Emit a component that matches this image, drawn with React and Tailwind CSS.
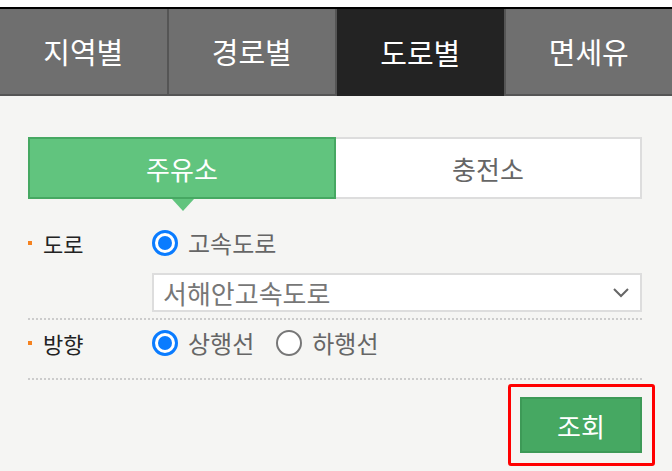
import { useState } from 'react';

const tabs = ['지역별', '경로별', '도로별', '면세유'];

function Radio({ checked, label }) {
  return (
    <label className="flex items-center gap-[10px] cursor-pointer">
      {checked ? (
        <span className="w-[26px] h-[26px] rounded-full border-[3px] border-[#0a7cff] bg-white flex items-center justify-center">
          <span className="w-[14px] h-[14px] rounded-full bg-[#0a7cff]" />
        </span>
      ) : (
        <span className="w-[26px] h-[26px] rounded-full border-2 border-[#777] bg-white" />
      )}
      <span className="text-[24px] text-[#666] leading-none">{label}</span>
    </label>
  );
}

function Label({ children }) {
  return (
    <div className="w-[124px] flex items-center">
      <span className="w-[4px] h-[4px] bg-[#f5821f] mr-[11px]" />
      <span className="text-[22px] text-[#222] leading-none">{children}</span>
    </div>
  );
}

export default function App() {
  const [active, setActive] = useState(2);
  const [station, setStation] = useState(0);

  return (
    <div
      className="w-[672px] h-[471px] bg-[#f5f5f3] overflow-hidden"
      style={{ fontFamily: '"Noto Sans CJK KR", "Noto Sans", sans-serif' }}
    >
      {/* 상단 탭 */}
      <div className="h-[7px] bg-white" />
      <div className="h-[2px] bg-black" />
      <div className="flex h-[87px]">
        {tabs.map((t, i) => (
          <button
            key={t}
            onClick={() => setActive(i)}
            className={
              'flex-1 flex items-center justify-center text-[29px] text-white ' +
              (i > 0 ? 'border-l-2 border-l-[#555] ' : '') +
              (i === active ? 'bg-[#232323]' : 'bg-[#6f6f6f] border-b-2 border-b-[#555]')
            }
          >
            {t}
          </button>
        ))}
      </div>

      <div className="pl-[28px] pr-[30px]">
        {/* 주유소 / 충전소 */}
        <div className="relative flex h-[62px] mt-[41px]">
          <button
            onClick={() => setStation(0)}
            className={
              'flex-1 flex items-center justify-center text-[26px] border-2 ' +
              (station === 0 ? 'bg-[#61c47e] border-[#46a862] text-white' : 'bg-white border-[#ddd] border-r-0 text-[#666]')
            }
          >
            주유소
          </button>
          <button
            onClick={() => setStation(1)}
            className={
              'flex-1 flex items-center justify-center text-[26px] border-2 ' +
              (station === 1 ? 'bg-[#61c47e] border-[#46a862] text-white' : 'bg-white border-[#ddd] border-l-0 text-[#666]')
            }
          >
            충전소
          </button>
          <span
            className={
              'absolute top-full w-0 h-0 border-x-[11px] border-x-transparent border-t-[12px] border-t-[#61c47e] ' +
              (station === 0 ? 'left-[144px]' : 'left-[451px]')
            }
          />
        </div>

        {/* 도로 */}
        <div className="flex items-center h-[28px] mt-[30px]">
          <Label>도로</Label>
          <Radio checked label="고속도로" />
        </div>
        <div className="ml-[124px] mt-[16px] h-[39px] bg-white border-2 border-[#ddd] flex items-center justify-between pl-[9px] pr-[10px]">
          <span className="text-[26px] text-[#777] leading-none">서해안고속도로</span>
          <svg width="18" height="12" viewBox="0 0 18 12" fill="none" stroke="#666" strokeWidth="2">
            <path d="M2 2l7 7 7-7" />
          </svg>
        </div>
        <div className="mt-[6px] border-t-2 border-dotted border-[#ccc]" />

        {/* 방향 */}
        <div className="flex items-center h-[28px] mt-[9px]">
          <Label>방향</Label>
          <div className="flex items-center gap-[22px]">
            <Radio checked label="상행선" />
            <Radio label="하행선" />
          </div>
        </div>
        <div className="mt-[21px] border-t-2 border-dotted border-[#ccc]" />

        {/* 조회 버튼 */}
        <div className="flex justify-end mt-[17px]">
          <div className="relative">
            <span className="absolute -top-[13px] -bottom-[13px] -left-[12px] -right-[13px] border-[3px] border-[#ff0000] rounded-[3px]" />
            <button className="relative w-[122px] h-[56px] bg-[#46a862] border-2 border-[#3d9a57] text-white text-[26px]">
              조회
            </button>
          </div>
        </div>
      </div>
    </div>
  );
}
